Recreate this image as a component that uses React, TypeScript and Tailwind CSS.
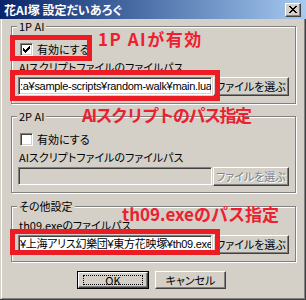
import type { ReactNode } from 'react';

const ui = "font-['Noto_Sans_CJK_JP',sans-serif] [font-feature-settings:'palt']";

function GroupBox({ title, className, children }: { title: string; className: string; children: ReactNode }) {
    return (
        <div className={`relative ml-[9px] w-[285px] border border-[#808080] shadow-[1px_1px_0_#fff,inset_1px_1px_0_#fff] ${className}`}>
            <span className="absolute left-[5px] top-[-8px] bg-[#d4d0c8] px-[2px] text-[11px] leading-[14px]">{title}</span>
            {children}
        </div>
    );
}

function CheckBox({ checked, label }: { checked: boolean; label: string }) {
    return (
        <div className="ml-[8px] mt-[16px] flex h-[13px] items-center gap-[4px]">
            <span className="flex h-[13px] w-[13px] items-center justify-center border border-b-white border-l-[#808080] border-r-white border-t-[#808080] bg-white shadow-[inset_1px_1px_0_#404040,inset_-1px_-1px_0_#d4d0c8]">
                {checked && (
                    <svg width="7" height="7" viewBox="0 0 7 7" shapeRendering="crispEdges">
                        <polygon points="0,2 2,4 7,-1 7,2 2,7 0,5" fill="#000" />
                    </svg>
                )}
            </span>
            <span className="text-[11px] leading-[13px]">{label}</span>
        </div>
    );
}

function Button({ children, disabled, className }: { children: ReactNode; disabled?: boolean; className: string }) {
    return (
        <div
            className={`flex items-center justify-center border border-b-[#404040] border-l-white border-r-[#404040] border-t-white bg-[#d4d0c8] text-[11px] leading-[13px] shadow-[inset_-1px_-1px_0_#808080] ${
                disabled ? 'text-[#808080] [text-shadow:1px_1px_0_#fff]' : 'text-black'
            } ${className}`}
        >
            {children}
        </div>
    );
}

function PathRow({ value, disabled }: { value: string; disabled?: boolean }) {
    return (
        <div className="ml-[6px] mt-[3px] flex items-start gap-[1px]">
            <div
                className={`flex h-[18px] w-[194px] items-center overflow-hidden whitespace-nowrap border border-b-white border-l-[#808080] border-r-white border-t-[#808080] px-[1px] font-['Liberation_Sans','Noto_Sans_CJK_JP',sans-serif] text-[11px] leading-[13px] tracking-[-0.3px] shadow-[inset_1px_1px_0_#404040,inset_-1px_-1px_0_#d4d0c8] ${
                    disabled ? 'bg-[#d4d0c8]' : 'bg-white'
                }`}
            >
                {value}
            </div>
            <Button disabled={disabled} className="h-[19px] w-[76px]">
                ファイルを選ぶ
            </Button>
        </div>
    );
}

export default function App() {
    return (
        <div className={`relative flex h-[300px] w-[306px] flex-col overflow-hidden bg-[#d4d0c8] text-black ${ui}`}>
            <div className="flex h-[19px] items-center justify-between bg-gradient-to-r from-[#0a246a] to-[#a6caf0] pl-[4px] pr-[5px]">
                <span className="text-[12px] font-bold leading-[14px] text-white">花AI塚 設定だいあろぐ</span>
                <div className="flex h-[14px] w-[16px] items-center justify-center border border-b-[#404040] border-l-white border-r-[#404040] border-t-white bg-[#d4d0c8] shadow-[inset_-1px_-1px_0_#808080]">
                    <svg width="8" height="7" viewBox="0 0 8 7" shapeRendering="crispEdges">
                        <path d="M0.5 0 L7.5 7 M7.5 0 L0.5 7" stroke="#000" strokeWidth="1.6" />
                    </svg>
                </div>
            </div>

            <div className="flex flex-1 flex-col border-b border-r border-[#404040]">
                <div className="ml-px flex flex-1 flex-col border-b border-l border-r border-b-[#808080] border-l-white border-r-[#808080]">
                    <GroupBox title="1P AI" className="mt-[7px] h-[78px]">
                        <CheckBox checked label="有効にする" />
                        <p className="ml-[7px] mt-[4px] text-[11px] leading-[14px]">AIスクリプトファイルのファイルパス</p>
                        <PathRow value=":a¥sample-scripts¥random-walk¥main.lua" />
                    </GroupBox>

                    <GroupBox title="2P AI" className="mt-[12px] h-[77px]">
                        <CheckBox checked={false} label="有効にする" />
                        <p className="ml-[7px] mt-[4px] text-[11px] leading-[14px]">AIスクリプトファイルのファイルパス</p>
                        <PathRow value="" disabled />
                    </GroupBox>

                    <GroupBox title="その他設定" className="mt-[13px] h-[56px]">
                        <p className="ml-[7px] mt-[11px] text-[11px] leading-[14px]">th09.exeのファイルパス</p>
                        <PathRow value="¥上海アリス幻樂団¥東方花映塚¥th09.exe" />
                    </GroupBox>

                    <div className="ml-[75px] mt-[9px] flex gap-[6px]">
                        <div className="h-[18px] w-[72px] border border-black">
                            <Button className="h-full w-full">
                                <span className="flex h-[10px] w-[60px] items-center justify-center border border-dotted border-black">OK</span>
                            </Button>
                        </div>
                        <Button className="h-[18px] w-[71px]">キャンセル</Button>
                    </div>
                </div>
            </div>

            {/* red annotations */}
            <div className="absolute left-[10px] top-[35px] h-[26px] w-[82px] border-[5px] border-[#ec1c24]" />
            <div className="absolute left-[10px] top-[70px] h-[31px] w-[210px] border-[5px] border-[#ec1c24]" />
            <div className="absolute left-[10px] top-[229px] h-[26px] w-[210px] border-[5px] border-[#ec1c24]" />
            <span className="absolute left-[98px] top-[30px] text-[17px] font-bold leading-[17px] tracking-[1.5px] text-[#ee2030] [font-feature-settings:normal]">1P AIが有効</span>
            <span className="absolute left-[82px] top-[106px] text-[17px] font-bold leading-[17px] tracking-[-1.5px] text-[#ee2030] [font-feature-settings:normal]">AIスクリプトのパス指定</span>
            <span className="absolute left-[122px] top-[205px] text-[17px] font-bold leading-[17px] text-[#ee2030] [font-feature-settings:normal]">th09.exeのパス指定</span>
        </div>
    );
}
